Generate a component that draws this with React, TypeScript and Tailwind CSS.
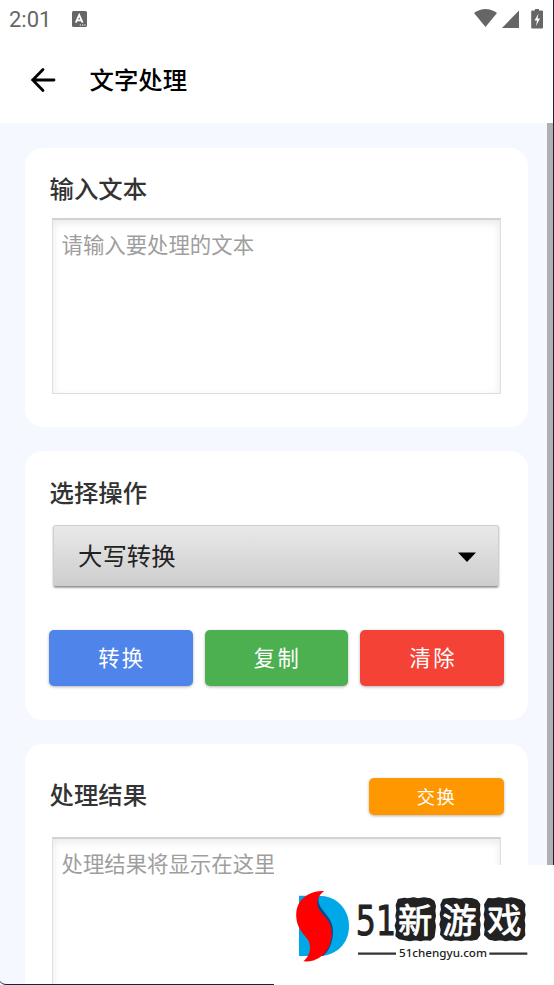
import React from "react";
import { clsx } from "clsx";

interface CardProps {
  className?: string;
  children: React.ReactNode;
}

function Card({ className, children }: CardProps) {
  return <section className={clsx("rounded-[18px] bg-white px-[25px]", className)}>{children}</section>;
}

interface ActionButtonProps {
  label: string;
  className: string;
}

function ActionButton({ label, className }: ActionButtonProps) {
  return (
    <button
      className={clsx(
        "flex items-center justify-center rounded-[5px] text-white shadow-[0_1px_3px_rgba(0,0,0,0.3)]",
        className
      )}
    >
      {label}
    </button>
  );
}

function StatusBar() {
  return (
    <div className="flex h-[37px] items-center pl-[9px] pr-[10px] text-[#666]">
      <span className="w-[42px] pt-[2px] font-[Roboto] text-[22px] leading-none">2:01</span>
      <svg className="ml-[21px]" width="15" height="16" viewBox="0 0 15 16">
        <rect width="15" height="16" rx="1.5" fill="#666" />
        <path d="M3.8 11.6 7.2 4l3.4 7.6M5 9.3h4.4" fill="none" stroke="#fff" strokeWidth="1.8" />
        <path d="M7.7 14h1.3M10 14h1.3M12.3 14h1.3" stroke="#fff" strokeWidth="1.2" />
      </svg>
      <svg className="ml-auto" width="70" height="20" viewBox="0 0 70 20">
        <path d="M0 4Q11.5-4 23 4L11.5 18Z" fill="#666" />
        <path d="M28 19 45 1.5V19Z" fill="#666" />
        <path d="M61 0h4v1.500h3q1 0 1 1V18.500q0 1-1 1H58.200q-1 0-1-1V2.500q0-1 1-1H61Z" fill="#666" />
        <path d="m64.500 4.500-4 7h2.500L62 17l4-7.500h-2.500Z" fill="#fff" />
      </svg>
    </div>
  );
}

function Brand() {
  return (
    <div className="absolute bottom-0 right-0 h-[120px] w-[280px] bg-white">
      <svg width="280" height="120" viewBox="12 15 840 360">
        <path d="M87 107H145C200 107 237 147 237 198C237 250 200 288 145 288H87Z" fill="#00a8e8" />
        <path
          d="M146 110C138 152 193 163 189 220C187 250 176 276 159 288H130V140Z"
          fill="#064a91"
        />
        <path
          d="M162 93C134 91 103 104 88 128C75 149 76 181 88 204C101 231 121 236 120 263C119 282 113 292 100 304C134 308 165 287 177 260C188 235 187 207 178 188C165 165 143 154 142 132C142 115 149 104 162 93Z"
          fill="#f00"
        />
        <text
          transform="translate(257.5 226) scale(0.79 1)"
          className="font-['DejaVu_Sans']"
          fontSize="120"
          fill="#222"
          stroke="#222"
          strokeWidth="3"
          strokeLinejoin="round"
        >
          51
        </text>
        <g fill="#222" stroke="#222" strokeWidth="6" strokeLinejoin="round">
          <path d="m386 119 17-3 10 2 18-3 13 3 18-3 19 3 10 7 4 13-2 15 2 15-3 14 3 16-2 17-2 15-10 9-17-1-12 3-15-3-18 3-16-3-15-3-9-8 2-15-4-15 5-15-3-14 3-17-2-15Z" />
          <path d="m521 119 17-2 13-1 18 3 18-3 18 1 15 5 8 11-1 15 2 16-3 13 3 17-2 16 1 15-8 11-16 3-15-1-15 3-18-3-14 2-17-4-12-13 2-14-4-16 4-14-3-17 4-14-2-14Z" />
          <path d="m655 117 17 1 14-3 18 3 19-3 17 3 15 5 8 11-1 15 2 15-3 16 2 14-1 17 1 14-9 11-15 4-17-2-15 3-16-3-15 2-18-4-13-12 2-15-3-16 3-15-3-15 3-15-2-14Z" />
        </g>
        <text
          y="219"
          className="font-['Noto_Sans_CJK_SC']"
          fontSize="103"
          fontWeight="400"
          fill="#fff"
          stroke="#fff"
          strokeWidth="2.5"
          strokeLinejoin="round"
        >
          <tspan x="384">新</tspan>
          <tspan x="517">游</tspan>
          <tspan x="652">戏</tspan>
        </text>
        <path d="M264 281H378M658 281H772" stroke="#333" strokeWidth="7" />
        <text
          x="387"
          y="291"
          textLength="264"
          lengthAdjust="spacingAndGlyphs"
          className="font-['Noto_Sans']"
          fontSize="31"
          fontWeight="500"
          fill="#222"
        >
          51chengyu.com
        </text>
      </svg>
    </div>
  );
}

const headingClass = "-ml-[0.5px] text-[24.400px] font-medium leading-[36px] text-[#333]";
const fieldClass =
  "mx-[2px] block w-[449px] resize-none rounded-none border border-t-2 border-[#dedede] border-t-[#d2d2d2] bg-white px-[8.500px] pt-[10px] text-[21.400px] leading-[32px] shadow-[inset_0_3px_8px_rgba(0,0,0,0.09)] outline-none placeholder:text-[#9e9e9e]";

export default function App() {
  return (
    <div className="relative flex h-[985px] w-[554px] flex-col overflow-hidden bg-white font-['Roboto','Noto_Sans_CJK_SC',sans-serif]">
      <StatusBar />
      <header className="flex h-[86px] items-center pl-[30px]">
        <svg
          width="26"
          height="26"
          viewBox="0 0 26 26"
          fill="none"
          stroke="#000"
          strokeWidth="2.800"
          strokeLinecap="round"
        >
          <path d="M13 2.500 2.700 13 13 23.500M2.700 13H24" />
        </svg>
        <h1 className="ml-[33.500px] pt-[2px] text-[24.400px] font-medium text-black">文字处理</h1>
      </header>

      <div className="flex min-h-0 flex-1 bg-[#f5f8ff]">
        <main className="flex w-[547px] flex-col gap-[24px] overflow-hidden pl-[25px] pr-[19px] pt-[25px]">
          <Card className="h-[279px] shrink-0 pt-[24px]">
            <h2 className={headingClass}>输入文本</h2>
            <textarea className={clsx(fieldClass, "mt-[10px] h-[176px]")} placeholder="请输入要处理的文本" />
          </Card>

          <Card className="h-[269px] shrink-0 pt-[25px]">
            <h2 className={headingClass}>选择操作</h2>
            <button className="ml-[3px] mt-[13px] flex h-[62px] w-[446px] items-center justify-between rounded-[3px] border border-[#d0d0d0] border-b-[#999] bg-linear-to-b from-[#e9e9e9] to-[#cdcdcd] pl-[24px] pr-[22px] pt-[2px] text-[24.400px] text-[#222] shadow-[0_1px_2px_rgba(0,0,0,0.35)]">
              大写转换
              <svg width="18" height="10" viewBox="0 0 18 10">
                <path d="M0 .5h18L9 10Z" fill="#000" />
              </svg>
            </button>
            <div className="-ml-px mt-[43px] flex w-[455px] gap-[12px]">
              <ActionButton
                label="转换"
                className="h-[56px] flex-1 bg-[#4f85ea] pl-[2px] pt-[2px] text-[21.300px] tracking-[2.400px]"
              />
              <ActionButton
                label="复制"
                className="h-[56px] flex-1 bg-[#4caf50] pl-[2px] pt-[2px] text-[21.300px] tracking-[2.400px]"
              />
              <ActionButton
                label="清除"
                className="h-[56px] flex-1 bg-[#f44336] pl-[2px] pt-[2px] text-[21.300px] tracking-[2.400px]"
              />
            </div>
          </Card>

          <Card className="h-[279px] shrink-0 pt-[34px]">
            <div className="flex h-[37px] w-[454px] items-start justify-between">
              <h2 className={headingClass}>处理结果</h2>
              <ActionButton
                label="交换"
                className="h-[37px] w-[135px] bg-[#ff9800] pt-[2px] text-[18.300px] tracking-[1.500px]"
              />
            </div>
            <textarea
              className={clsx(fieldClass, "mt-[22px] h-[176px]")}
              placeholder="处理结果将显示在这里"
              readOnly
            />
          </Card>
        </main>
        <div className="w-[6px] bg-[#b0b1b5]" />
      </div>

      {/* device frame edge */}
      <div className="pointer-events-none absolute inset-y-0 -left-px right-0 rounded-bl-[7px] border-b border-r border-[#201f38]" />
      <Brand />
    </div>
  );
}
